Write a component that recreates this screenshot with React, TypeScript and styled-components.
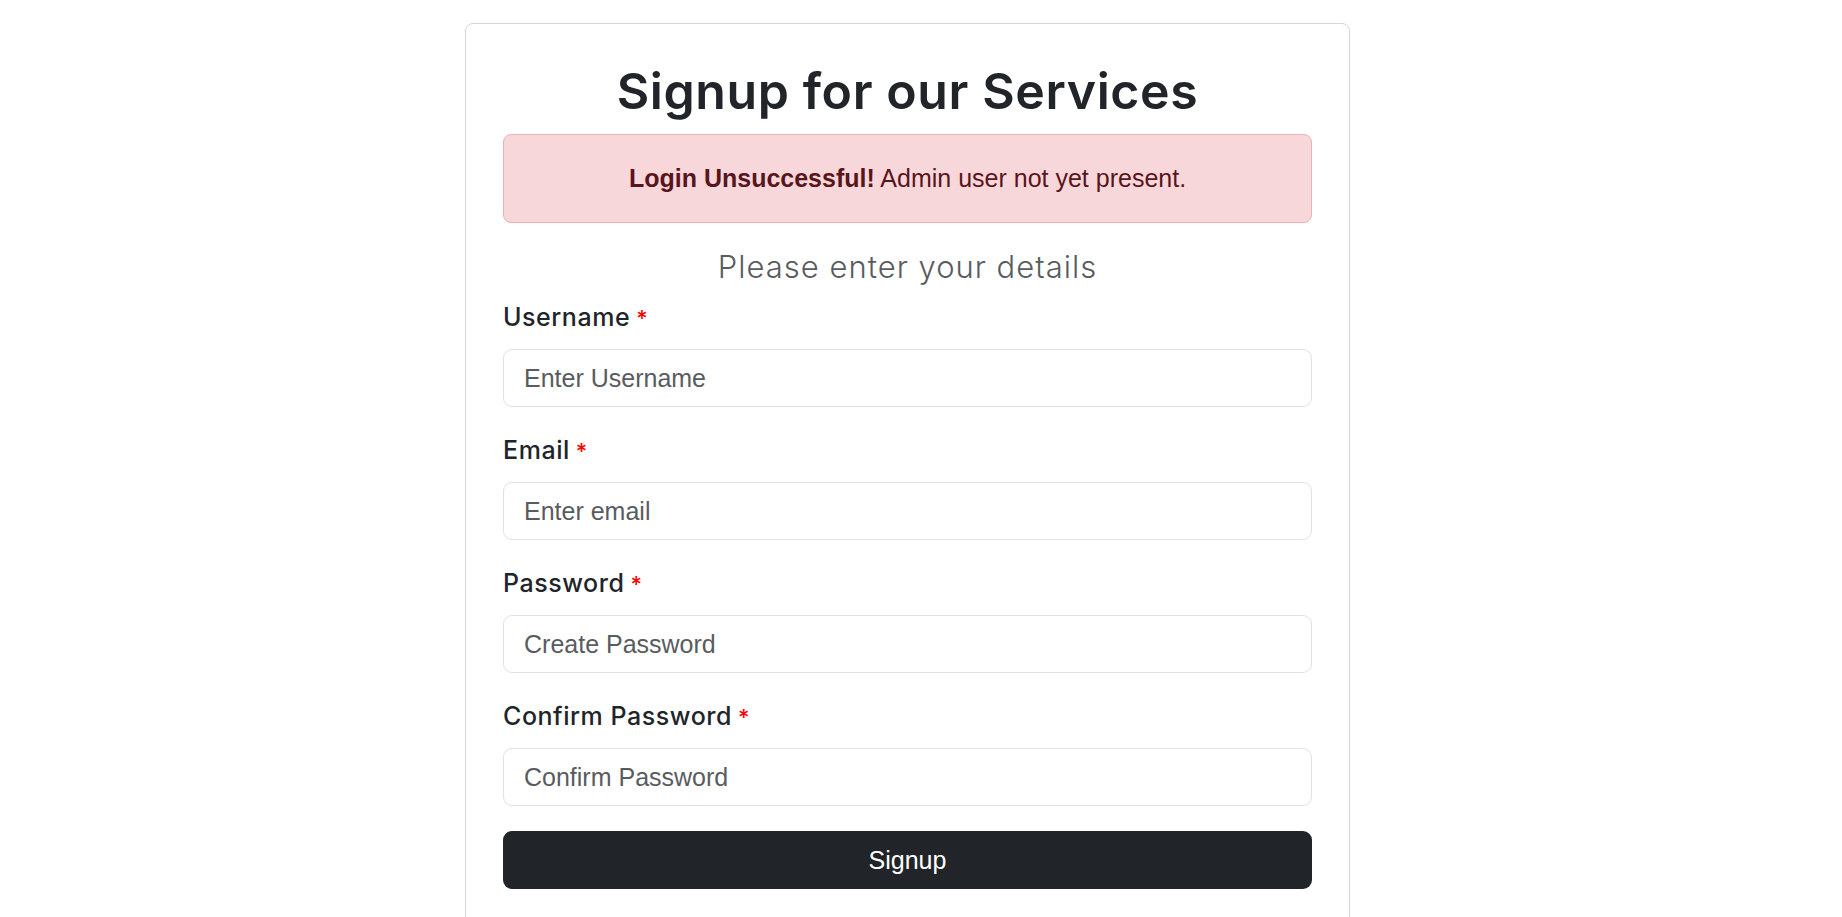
import React from "react";
import styled, { createGlobalStyle } from "styled-components";

const GlobalStyle = createGlobalStyle`
  html, body {
    margin: 0;
    padding: 0;
    background: #ffffff;
  }
  body {
    font-family: "Liberation Sans", Arial, sans-serif;
    color: #212529;
  }
  * { box-sizing: border-box; }
`;

const Page = styled.div`
  padding: 23px 0 50px;
`;

const Card = styled.div`
  width: 885px;
  margin-left: calc(50% - 456px);
  border: 1px solid #d6d6d6;
  border-radius: 8px;
  padding: 37px 37px 36px;
  display: flex;
  flex-direction: column;
`;

const Title = styled.h1`
  margin: 0 0 13px;
  font-family: Inter, "Noto Sans", sans-serif;
  font-weight: 600;
  font-size: 50px;
  line-height: 60px;
  letter-spacing: 0.6px;
  text-align: center;
  color: #212529;
`;

const Alert = styled.div`
  background: #f8d7da;
  border: 1px solid #f1aeb5;
  border-radius: 8px;
  color: #58151c;
  padding: 25px 20px;
  font-family: "Liberation Sans", Arial, sans-serif;
  font-size: 25px;
  line-height: 37px;
  text-align: center;
  strong { font-weight: 700; }
`;

const Subtitle = styled.h2`
  margin: 24px 0 12px;
  font-family: Inter, "Noto Sans", sans-serif;
  font-weight: 300;
  font-size: 31px;
  line-height: 40px;
  letter-spacing: 1px;
  text-align: center;
  color: #595c5f;
`;

const Form = styled.form`
  display: flex;
  flex-direction: column;
  gap: 25px;
`;

const Field = styled.div`
  display: flex;
  flex-direction: column;
  gap: 13px;
`;

const Label = styled.label`
  font-family: Inter, "Noto Sans", sans-serif;
  font-weight: 500;
  font-size: 25px;
  line-height: 36px;
  letter-spacing: 0.55px;
  color: #212529;
`;

const Required = styled.span`
  color: #ff0000;
  margin-left: 6px;
  font-size: 22px;
`;

const Input = styled.input`
  height: 58px;
  width: 100%;
  border: 1px solid #dee2e6;
  border-radius: 9px;
  padding: 0 20px;
  font-family: "Liberation Sans", Arial, sans-serif;
  font-size: 25px;
  color: #212529;
  background: #fff;
  outline: none;
  &::placeholder {
    color: #595c5f;
  }
`;

const Button = styled.button`
  height: 58px;
  width: 100%;
  border: none;
  border-radius: 9px;
  background: #212529;
  color: #ffffff;
  font-family: "Liberation Sans", Arial, sans-serif;
  font-size: 25px;
  cursor: pointer;
`;

const fields = [
  { label: "Username", type: "text", placeholder: "Enter Username" },
  { label: "Email", type: "email", placeholder: "Enter email" },
  { label: "Password", type: "password", placeholder: "Create Password" },
  { label: "Confirm Password", type: "password", placeholder: "Confirm Password" },
];

export default function App() {
  return (
    <>
      <GlobalStyle />
      <Page>
        <Card>
          <Title>Signup for our Services</Title>
          <Alert>
            <strong>Login Unsuccessful!</strong> Admin user not yet present.
          </Alert>
          <Subtitle>Please enter your details</Subtitle>
          <Form onSubmit={(e) => e.preventDefault()}>
            {fields.map((f) => (
              <Field key={f.label}>
                <Label>
                  {f.label}
                  <Required>*</Required>
                </Label>
                <Input type={f.type} placeholder={f.placeholder} />
              </Field>
            ))}
            <Button type="submit">Signup</Button>
          </Form>
        </Card>
      </Page>
    </>
  );
}
